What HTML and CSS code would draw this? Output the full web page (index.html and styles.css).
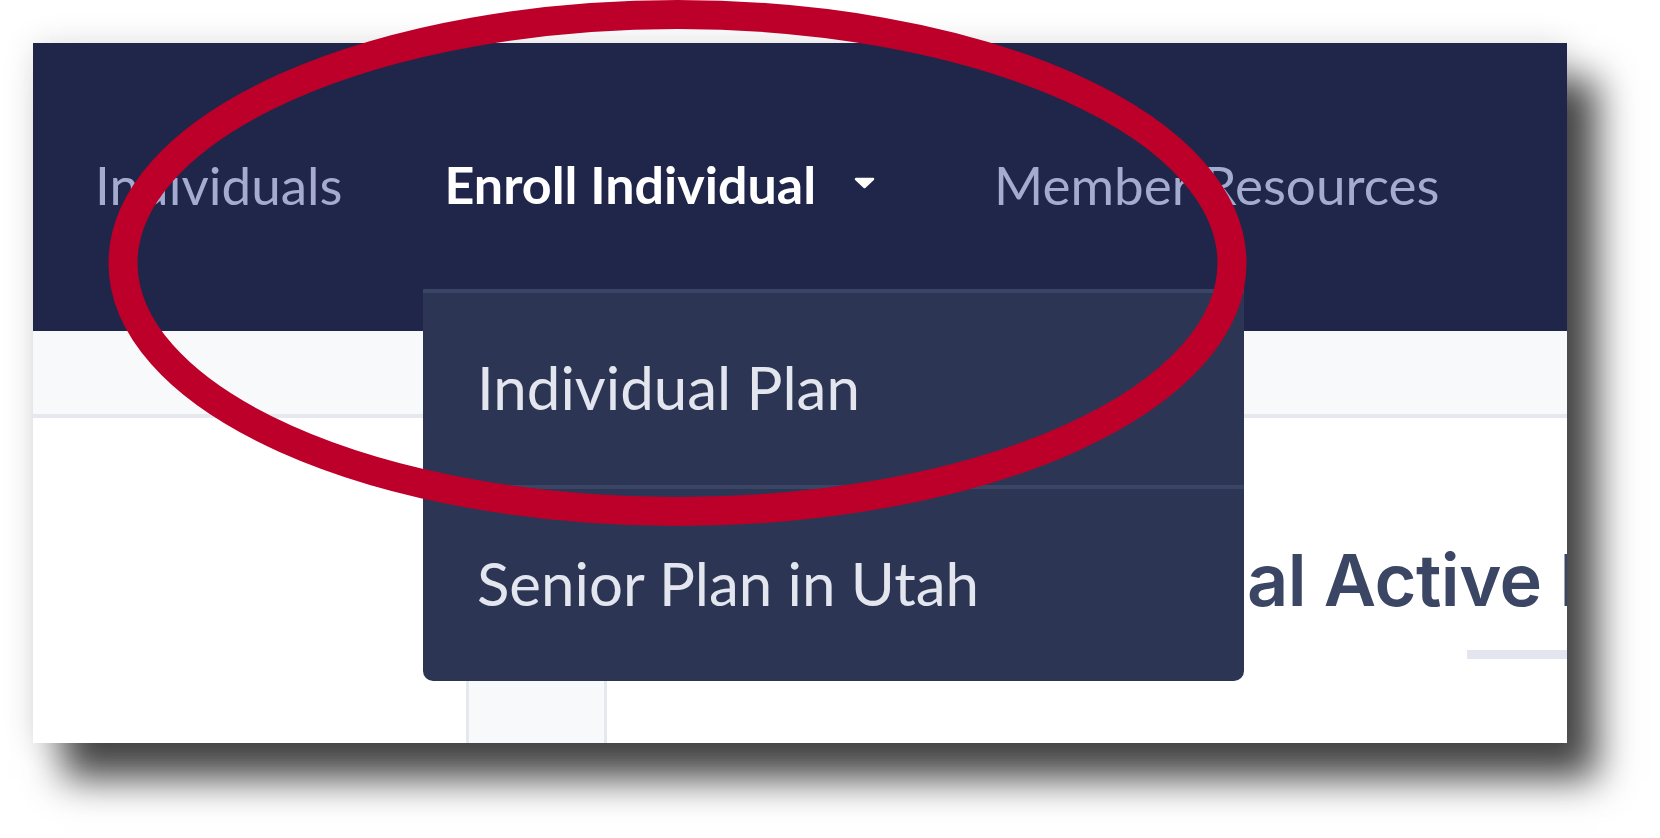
FILE: index.html
```html
<!DOCTYPE html>
<html lang="en">
<head>
<meta charset="utf-8">
<title>Enroll Individual menu</title>
<link rel="stylesheet" href="styles.css">
</head>
<body>
<div class="stage">
  <div class="frame">
    <header class="topbar">
      <nav class="nav">
        <a class="nav-item nav-muted">Individuals</a>
        <a class="nav-item nav-active">Enroll Individual<svg class="caret" viewBox="0 0 21 12"><path d="M2 2 L19 2 L10.5 10 Z" fill="#fff" stroke="#fff" stroke-width="2.5" stroke-linejoin="round"/></svg></a>
        <a class="nav-item nav-muted">Member Resources</a>
      </nav>
    </header>
    <div class="subbar"></div>
    <main class="content">
      <h1 class="title">Individual Active Members</h1>
      <div class="title-rule"></div>
      <div class="side-col"></div>
    </main>
    <ul class="dropdown">
      <li class="dropdown-item">Individual Plan</li>
      <li class="dropdown-item">Senior Plan in Utah</li>
    </ul>
  </div>
  <svg class="annotation" viewBox="0 0 1660 838" width="1660" height="838">
    <ellipse cx="677.5" cy="263" rx="554.5" ry="248.5" fill="none" stroke="#bd0029" stroke-width="29"/>
  </svg>
</div>
</body>
</html>
```

FILE: styles.css
```css
html, body {
  margin: 0;
  padding: 0;
  background: #ffffff;
}

body {
  font-family: Lato, "Liberation Sans", sans-serif;
}

.stage {
  position: relative;
  width: 1660px;
  height: 838px;
  overflow: hidden;
  padding: 43px 0 0 33px;
  box-sizing: border-box;
}

.frame {
  position: relative;
  width: 1534px;
  height: 700px;
  background: #ffffff;
  overflow: hidden;
  display: flex;
  flex-direction: column;
  box-shadow: 30px 36px 36px rgba(0, 0, 0, 0.72), 0 0 30px rgba(0, 0, 0, 0.12);
}

.topbar {
  flex-shrink: 0;
  height: 288px;
  box-sizing: border-box;
  padding: 0 0 5px 62px;
  background: #1f2649;
  display: flex;
  align-items: center;
}

.nav {
  display: flex;
  align-items: center;
}

.nav-item {
  font-size: 53px;
  line-height: 1.2;
  white-space: nowrap;
}

.nav-muted {
  color: #a3abcf;
}

.nav-active {
  color: #ffffff;
  font-size: 52px;
  font-weight: 700;
  display: flex;
  align-items: center;
  gap: 38px;
  margin: 0 119px 0 102px;
}

.caret {
  width: 21px;
  height: 12px;
  margin-top: -2px;
}

.subbar {
  flex-shrink: 0;
  height: 83px;
  background: #f8f9fb;
  border-bottom: 4px solid #e5e8ef;
}

.content {
  flex: 1;
  display: flex;
  flex-direction: column;
  min-height: 0;
}

.title {
  margin: 124px 0 0 940px;
  font-family: Inter, "Liberation Sans", sans-serif;
  font-weight: 600;
  font-size: 72px;
  line-height: 75px;
  letter-spacing: -0.5px;
  color: #3b4564;
  white-space: nowrap;
}

.title-rule {
  flex-shrink: 0;
  margin: 33px 0 0 1434px;
  width: 300px;
  height: 9px;
  background: #e3e6ef;
}

.side-col {
  flex: 1;
  margin: 11px 0 0 433px;
  width: 141px;
  box-sizing: border-box;
  background: #f8f9fb;
  border-left: 3px solid #e5e8ef;
  border-right: 3px solid #e5e8ef;
}

.dropdown {
  position: absolute;
  left: 390px;
  top: 246px;
  width: 821px;
  margin: 0;
  padding: 0;
  list-style: none;
  box-sizing: border-box;
  background: #2c3654;
  border-top: 4px solid #3a4565;
  border-radius: 0 0 10px 10px;
}

.dropdown-item {
  height: 192px;
  box-sizing: border-box;
  display: flex;
  align-items: center;
  padding: 0 0 4px 54px;
  font-size: 60px;
  color: #e3e6ee;
  white-space: nowrap;
}

.dropdown-item + .dropdown-item {
  height: 196px;
  border-top: 4px solid #3a4565;
}

.annotation {
  position: absolute;
  left: 0;
  top: 0;
  pointer-events: none;
}
```
